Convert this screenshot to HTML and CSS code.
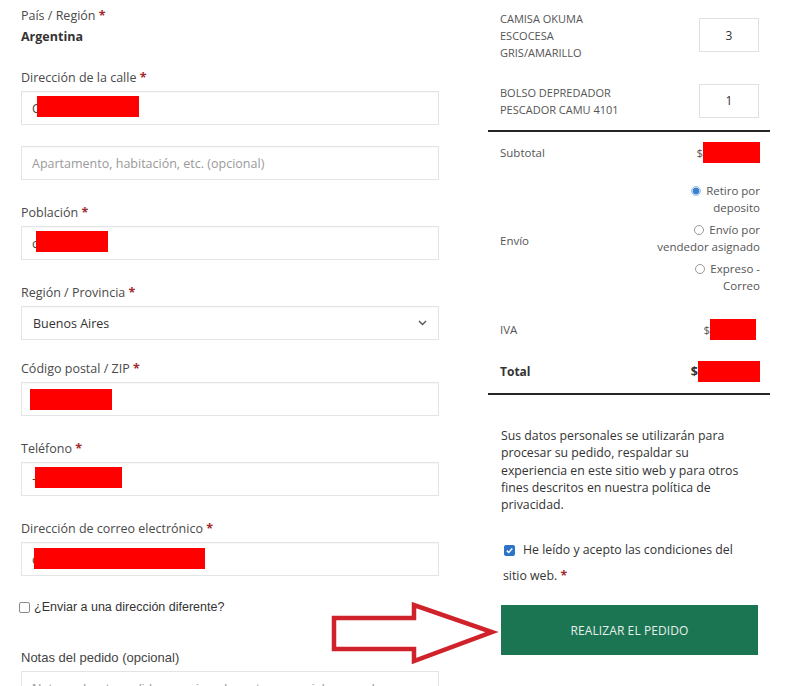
FILE: index.html
```html
<!DOCTYPE html>
<html lang="es">
<head>
<meta charset="utf-8">
<title>Finalizar compra</title>
<link rel="stylesheet" href="styles.css">
</head>
<body>
<div class="page">
  <div class="billing">
    <div class="field country">
      <div class="label label-tight">País / Región <span class="req">*</span></div>
      <div class="strong">Argentina</div>
    </div>

    <div class="field">
      <div class="label">Dirección de la calle <span class="req">*</span></div>
      <div class="input"><span class="typed">C</span><span class="redact r-street"></span></div>
      <div class="input second"><span class="placeholder">Apartamento, habitación, etc. (opcional)</span></div>
    </div>

    <div class="field">
      <div class="label">Población <span class="req">*</span></div>
      <div class="input"><span class="typed">c</span><span class="redact r-city"></span></div>
    </div>

    <div class="field field-select">
      <div class="label">Región / Provincia <span class="req">*</span></div>
      <div class="input select">
        <span class="selected">Buenos Aires</span>
        <svg class="chevron" width="9" height="6" viewBox="0 0 9 6"><path d="M1 1 L4.5 4.5 L8 1" fill="none" stroke="#555" stroke-width="1.4"/></svg>
      </div>
    </div>

    <div class="field">
      <div class="label">Código postal / ZIP <span class="req">*</span></div>
      <div class="input"><span class="redact r-zip"></span></div>
    </div>

    <div class="field">
      <div class="label">Teléfono <span class="req">*</span></div>
      <div class="input"><span class="typed">+</span><span class="redact r-phone"></span></div>
    </div>

    <div class="field">
      <div class="label">Dirección de correo electrónico <span class="req">*</span></div>
      <div class="input"><span class="typed">c</span><span class="redact r-mail"></span></div>
    </div>

    <label class="ship-diff"><span class="box"></span>¿Enviar a una dirección diferente?</label>

    <div class="notes">
      <div class="notes-label">Notas del pedido (opcional)</div>
      <div class="textarea"><span class="placeholder-sans">Notas sobre tu pedido, por ejemplo, notas especiales para la entrega.</span></div>
    </div>
  </div>

  <div class="order">
    <div class="products">
      <div class="product">
        <div class="pname">CAMISA OKUMA ESCOCESA GRIS/AMARILLO</div>
        <div class="qty">3</div>
      </div>
      <div class="product">
        <div class="pname">BOLSO DEPREDADOR PESCADOR CAMU 4101</div>
        <div class="qty">1</div>
      </div>
    </div>

    <div class="totals">
      <div class="row row-sub">
        <span>Subtotal</span>
        <span class="amount"><span class="cur">$</span><span class="redact r-sub"></span></span>
      </div>
      <div class="row row-ship">
        <span>Envío</span>
        <ul class="methods">
          <li><span class="radio checked"></span>Retiro por deposito</li>
          <li><span class="radio"></span>Envío por vendedor asignado</li>
          <li><span class="radio"></span>Expreso - Correo</li>
        </ul>
      </div>
      <div class="row row-iva">
        <span>IVA</span>
        <span class="amount"><span class="cur">$</span><span class="redact r-iva"></span></span>
      </div>
      <div class="row row-total">
        <span>Total</span>
        <span class="amount"><span class="cur">$</span><span class="redact r-total"></span></span>
      </div>
    </div>

    <div class="payment">
      <p class="privacy">Sus datos personales se utilizarán para<br>procesar su pedido, respaldar su<br>experiencia en este sitio web y para otros<br>fines descritos en nuestra política de<br>privacidad.</p>
      <p class="terms"><span class="check"><svg width="9" height="9" viewBox="0 0 9 9"><path d="M1.8 4.6 L3.7 6.5 L7.3 2.5" fill="none" stroke="#fff" stroke-width="1.5"/></svg></span>He leído y acepto las condiciones del<br>sitio web.&nbsp;<span class="req">*</span></p>
      <div class="place-order">REALIZAR EL PEDIDO</div>
    </div>
  </div>

  <svg class="arrow" width="170" height="70" viewBox="0 0 170 70">
    <path d="M3 16 L83 16 L83 3 L161 30 L83 59 L83 47 L3 47 Z" fill="none" stroke="#d0222b" stroke-width="4.5" stroke-linejoin="miter"/>
  </svg>
</div>
</body>
</html>
```

FILE: styles.css
```css
* { box-sizing: border-box; }

html, body {
  margin: 0;
  padding: 0;
  background: #fff;
}

.page {
  position: relative;
  display: flex;
  align-items: flex-start;
  width: 800px;
  height: 686px;
  overflow: hidden;
  font-family: "Open Sans", "Noto Sans", sans-serif;
  font-size: 12px;
  color: #444;
}

/* ---------- left column ---------- */
.billing {
  width: 418px;
  margin-left: 21px;
  padding-top: 6px;
}

.field { margin-bottom: 22px; }
.field-select { margin-bottom: 18px; }
.country { margin-bottom: 20px; }

.label {
  line-height: 20px;
  padding-top: 1px;
  margin-bottom: 3px;
  color: #4a4a4a;
  font-size: 12.5px;
}

.label-tight { padding-top: 0; margin-bottom: 0; }

.req {
  color: #a12a2c;
  font-weight: 700;
}

.strong {
  line-height: 20px;
  padding-top: 1px;
  font-weight: 700;
  color: #333;
  font-size: 12.5px;
}

.input {
  display: flex;
  align-items: center;
  height: 34px;
  border: 1px solid #e4e4e4;
  box-shadow: inset 0 1px 1px rgba(0,0,0,0.03);
  background: #fff;
  padding-left: 10px;
  padding-right: 12px;
  font-size: 12.5px;
  color: #333;
}

.input.second { margin-top: 21px; }

.placeholder { color: #9a9a9a; }

.typed { color: #444; }

.redact {
  display: inline-block;
  height: 21px;
  background: #ff0000;
}

.r-street { width: 102px; margin-left: -3px; margin-top: -4px; }
.r-city   { width: 72px;  margin-left: -2px; margin-top: -4px; }
.r-zip    { width: 82px;  margin-left: -2px; margin-top: 0; }
.r-phone  { width: 87px;  margin-left: -4px; margin-top: -3px; }
.r-mail   { width: 171px; margin-left: -4px; margin-top: -2px; }

.select { justify-content: space-between; padding-left: 11px; }
.selected { color: #333; }
.chevron { margin-right: -1px; }

.ship-diff {
  display: flex;
  align-items: center;
  margin-left: -2px;
  margin-top: -1px;
  line-height: 20px;
  font-family: "Liberation Sans", Arial, sans-serif;
  font-size: 12.5px;
  color: #333;
}

.ship-diff .box {
  width: 11px;
  height: 11px;
  border: 1px solid #8a8a8a;
  border-radius: 2px;
  margin-right: 4px;
  background: #fff;
}

.notes { margin-top: 31px; }

.notes-label {
  line-height: 20px;
  margin-bottom: 3px;
  font-family: "Liberation Sans", Arial, sans-serif;
  font-size: 13px;
  color: #444;
}

.textarea {
  height: 80px;
  border: 1px solid #e4e4e4;
  padding: 8px 10px;
  line-height: 18px;
}

.placeholder-sans {
  font-family: "Liberation Sans", Arial, sans-serif;
  font-size: 13px;
  color: #9a9a9a;
}

/* ---------- right column ---------- */
.order {
  width: 282px;
  margin-left: 49px;
}

.products {
  padding: 9.5px 11px 12px 12px;
  border-bottom: 2px solid #262626;
}

.product {
  display: flex;
  align-items: center;
  justify-content: space-between;
}

.product + .product { margin-top: 23px; }

.pname {
  width: 128px;
  font-size: 11px;
  line-height: 17px;
  color: #555;
  text-transform: uppercase;
}

.qty {
  display: flex;
  align-items: center;
  justify-content: center;
  width: 60px;
  height: 34px;
  border: 1px solid #e0e0e0;
  font-size: 12px;
  color: #333;
}

.totals {
  border-bottom: 2px solid #262626;
  font-size: 11.5px;
  color: #555;
}

.row {
  display: flex;
  align-items: center;
  justify-content: space-between;
  padding: 0 10px 0 12px;
  height: 42px;
}

.row-ship {
  height: auto;
  padding-top: 8px;
  padding-bottom: 14px;
}

.row-ship > span { margin-top: 4px; }

.amount {
  display: flex;
  align-items: center;
}

.cur { color: #555; }

.r-sub   { width: 57px; }
.r-iva   { width: 46px; margin-right: 4px; }
.r-total { width: 62px; }

.row-total {
  font-weight: 700;
  font-size: 12px;
  color: #333;
}
.row-total .cur { color: #333; font-size: 12.5px; }

.methods {
  list-style: none;
  margin: 0;
  padding: 0;
  width: 104px;
  text-align: right;
  line-height: 17.5px;
}

.methods li { margin-bottom: 4px; }
.methods li:last-child { margin-bottom: 0; }

.radio {
  display: inline-block;
  vertical-align: -1px;
  width: 10px;
  height: 10px;
  border: 1px solid #9a9a9a;
  border-radius: 50%;
  margin-right: 5px;
  background: #fff;
}

.radio.checked {
  border: 1px solid #9cc2e8;
  background: radial-gradient(circle, #3b82d0 0 3.2px, #cfe0f3 3.6px);
}

.payment {
  padding: 32.5px 12px 0 13px;
}

.privacy {
  margin: 0;
  font-size: 12.3px;
  line-height: 17.3px;
  color: #333;
}

.terms {
  margin: 24px 0 0;
  padding-left: 2px;
  font-size: 12.3px;
  line-height: 26px;
  color: #333;
}

.check {
  display: inline-flex;
  align-items: center;
  justify-content: center;
  vertical-align: -1px;
  width: 11px;
  height: 11px;
  border-radius: 2px;
  background: #2b74c7;
  margin: 0 8px 0 1px;
}

.place-order {
  display: flex;
  align-items: center;
  justify-content: center;
  width: 257px;
  height: 50px;
  margin-top: 16px;
  background: #1b7553;
  color: #e6efea;
  font-size: 12px;
  letter-spacing: 0.1px;
}

/* red annotation arrow drawn over the screenshot */
.arrow {
  position: absolute;
  left: 331px;
  top: 602px;
}
```
